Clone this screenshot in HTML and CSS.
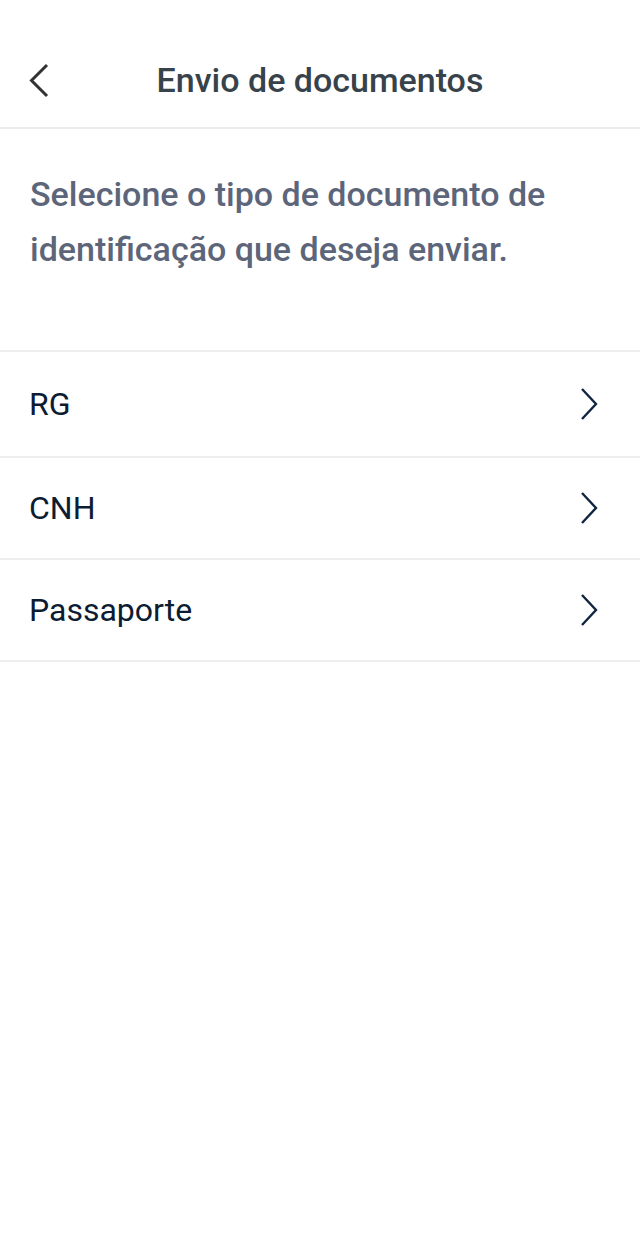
FILE: index.html
```html
<!DOCTYPE html>
<html lang="pt-BR">
<head>
  <meta charset="UTF-8" />
  <meta name="viewport" content="width=device-width, initial-scale=1" />
  <title>Envio de documentos</title>
  <link rel="stylesheet" href="styles.css">
</head>
<body>
  <header class="topo">
    <button class="voltar" aria-label="Voltar">
      <svg width="24" height="36" viewBox="0 0 24 36">
        <path d="M19 2 L3.5 17.5 L19 33" fill="none" stroke="#333" stroke-width="3" />
      </svg>
    </button>
    <h1>Envio de documentos</h1>
  </header>

  <p class="instrucao">Selecione o tipo de documento de identificação que deseja enviar.</p>

  <ul class="lista">
    <li class="item">
      <span>RG</span>
      <svg class="seta" width="20" height="34" viewBox="0 0 20 34">
        <path d="M3 2 L17 17 L3 32" fill="none" stroke="#0f2540" stroke-width="2.4" />
      </svg>
    </li>
    <li class="item">
      <span>CNH</span>
      <svg class="seta" width="20" height="34" viewBox="0 0 20 34">
        <path d="M3 2 L17 17 L3 32" fill="none" stroke="#0f2540" stroke-width="2.4" />
      </svg>
    </li>
    <li class="item">
      <span>Passaporte</span>
      <svg class="seta" width="20" height="34" viewBox="0 0 20 34">
        <path d="M3 2 L17 17 L3 32" fill="none" stroke="#0f2540" stroke-width="2.4" />
      </svg>
    </li>
  </ul>
</body>
</html>
```

FILE: styles.css
```css
html, body {
  margin: 0;
  padding: 0;
  background: #fff;
  font-family: Roboto, 'Noto Sans', sans-serif;
}

.topo {
  height: 127px;
  border-bottom: 2px solid #eaeef1;
  display: flex;
  justify-content: center;
  position: relative;
}

.voltar {
  position: absolute;
  left: 28px;
  top: 63px;
  border: none;
  background: none;
  padding: 0;
  display: flex;
}

.topo h1 {
  margin: 0;
  padding-top: 60px;
  font-size: 34px;
  line-height: 40px;
  font-weight: 500;
  color: #37424a;
}

.instrucao {
  margin: 0;
  padding: 38px 30px 0;
  height: 183px;
  font-size: 34px;
  line-height: 55px;
  font-weight: 500;
  color: #5c6579;
}

.lista {
  list-style: none;
  margin: 0;
  padding: 0;
  border-top: 2px solid #eeeeee;
}

.item {
  height: 100px;
  border-bottom: 2px solid #eeeeee;
  display: flex;
  align-items: center;
  justify-content: space-between;
  padding: 0 41px 0 29px;
  font-size: 32px;
  color: #0c1c33;
}

.item:first-child {
  height: 104px;
}

.seta {
  display: block;
}
```
